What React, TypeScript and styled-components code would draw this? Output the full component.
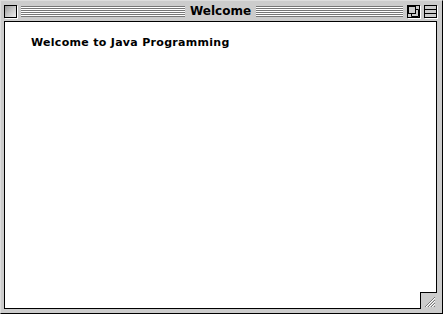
import { FC } from 'react';
import styled, { createGlobalStyle } from 'styled-components';

const Global = createGlobalStyle`
	html, body {
		margin: 0;
		padding: 0;
		background: #ffffff;
	}
	* {
		box-sizing: border-box;
	}
`;

const Window = styled.div`
	width: 443px;
	height: 314px;
	display: flex;
	flex-direction: column;
	background: #cccccc;
	border-top: 1px solid #dddddd;
	border-left: 1px solid #dddddd;
	border-right: 1px solid #000000;
	border-bottom: 1px solid #000000;
	font-family: 'DejaVu Sans', sans-serif;
`;

const TitleBar = styled.div`
	height: 20px;
	flex: none;
	display: grid;
	grid-template-columns: 1fr auto 1fr;
	align-items: center;
	padding: 0 5px 0 3px;
`;

const Side = styled.div`
	display: flex;
	align-items: center;
	gap: 4px;
`;

const BoxButton = styled.div`
	width: 13px;
	height: 13px;
	flex: none;
	border: 1px solid #000000;
	background: linear-gradient(135deg, #999999 0%, #cccccc 55%, #eeeeee 100%);
	box-shadow: 1px 1px 0 #ffffff;
`;

const Stripes = styled.div`
	flex: 1;
	height: 11px;
	background: repeating-linear-gradient(
		to bottom,
		#777777 0px,
		#777777 1px,
		#ffffff 1px,
		#ffffff 2px
	);
`;

const Title = styled.div`
	padding: 0 5px;
	font-size: 12px;
	font-weight: bold;
	color: #000000;
	line-height: 16px;
`;

const WidgetBox = styled.div`
	width: 13px;
	height: 13px;
	flex: none;
	border: 1px solid #000000;
	background: #cccccc;
	box-shadow: 1px 1px 0 #ffffff;
	display: flex;
	align-items: center;
	justify-content: center;
`;

const Content = styled.div`
	flex: 1;
	position: relative;
	margin: 0 5px 4px 3px;
	background: #ffffff;
	border: 1px solid #000000;
	padding: 14px 26px;
`;

const Message = styled.div`
	font-size: 11px;
	font-weight: bold;
	color: #000000;
	letter-spacing: 0.3px;
`;

const GrowBox = styled.div`
	position: absolute;
	right: -1px;
	bottom: -1px;
	width: 17px;
	height: 17px;
	background: #cccccc;
	border-top: 1px solid #000000;
	border-left: 1px solid #000000;
	display: flex;
	align-items: center;
	justify-content: center;
`;

const Grip: FC = () => (
	<svg width="14" height="14" viewBox="0 0 14 14">
		{[0, 3, 6, 9].map((o) => (
			<g key={o}>
				<line x1={3 + o} y1={13} x2={13} y2={3 + o} stroke="#777777" strokeWidth="1" />
				<line x1={4 + o} y1={13} x2={13} y2={4 + o} stroke="#ffffff" strokeWidth="1" />
			</g>
		))}
	</svg>
);

export default function App() {
	return (
		<>
			<Global />
			<Window>
				<TitleBar>
					<Side>
						<BoxButton />
						<Stripes />
					</Side>
					<Title>Welcome</Title>
					<Side>
						<Stripes />
						<WidgetBox>
							<svg width="11" height="11" viewBox="0 0 11 11">
								<rect x="0.5" y="0.5" width="7" height="7" fill="none" stroke="#000" />
								<path d="M3.5 7.5 V10.5 H10.5 V3.5 H7.5" fill="none" stroke="#000" />
							</svg>
						</WidgetBox>
						<WidgetBox>
							<svg width="11" height="11" viewBox="0 0 11 11">
								<line x1="0" y1="3.5" x2="11" y2="3.5" stroke="#000" />
								<line x1="0" y1="7.5" x2="11" y2="7.5" stroke="#000" />
							</svg>
						</WidgetBox>
					</Side>
				</TitleBar>
				<Content>
					<Message>Welcome to Java Programming</Message>
					<GrowBox>
						<Grip />
					</GrowBox>
				</Content>
			</Window>
		</>
	);
}
